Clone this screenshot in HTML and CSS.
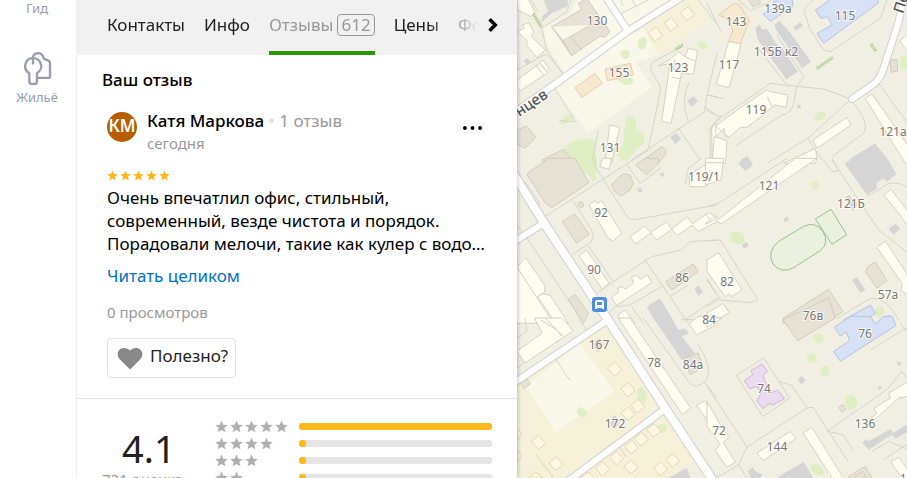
FILE: index.html
```
<!DOCTYPE html>
<html lang="ru">
<head>
    <meta charset="UTF-8">
    <meta name="viewport" content="width=device-width, initial-scale=1.0">
    <title>Отзывы</title>
    <link rel="stylesheet" href="styles.css">
</head>
<body>

<!-- Shared icons -->
<svg class="sprite" aria-hidden="true">
    <symbol id="star" viewBox="0 0 24 24">
        <path d="M12 1l3.300 7.600 8.200.7-6.200 5.400 1.900 8.100L12 18.500l-7.200 4.300 1.900-8.100L.5 9.300l8.200-.7z"/>
    </symbol>
</svg>

<div class="app">
    <nav class="sidebar">
        <a class="side-link" href="#">Гид</a>
        <a class="side-link" href="#">
            <svg class="side-icon" viewBox="66 152 87 104" aria-hidden="true">
                <path d="M94 176q2-17 17-18 15 1 17 16l15 7q4 2 4 7v39q0 5-4 5h-33"/>
                <path d="M96 173a24 24 0 0 0-11 45v24q0 8 7 8h9q7 0 7-8v-24a24 24 0 0 0-12-45z"/>
                <path d="M96 175v14"/>
            </svg>
            Жильё
        </a>
    </nav>

    <main class="panel">
        <div class="tabs">
            <div class="tab-list">
                <a class="tab" href="#">Контакты</a>
                <a class="tab" href="#">Инфо</a>
                <a class="tab active" href="#">Отзывы <span class="count">612</span></a>
                <a class="tab" href="#">Цены</a>
                <a class="tab" href="#">Фото</a>
            </div>
            <button class="next" type="button" aria-label="Дальше">
                <svg viewBox="0 0 10 14"><path d="M2 2l5 5-5 5"/></svg>
            </button>
        </div>

        <section class="my-review">
            <h2>Ваш отзыв</h2>
            <div class="author">
                <div class="avatar">КМ</div>
                <div class="author-info">
                    <div class="author-name"><b>Катя Маркова</b><i class="dot"></i><span>1 отзыв</span></div>
                    <div class="date">сегодня</div>
                </div>
                <button class="more" type="button" aria-label="Ещё">
                    <svg viewBox="0 0 20 4"><circle cx="2" cy="2" r="2"/><circle cx="10" cy="2" r="2"/><circle cx="18" cy="2" r="2"/></svg>
                </button>
            </div>
            <div class="stars">
                <svg><use href="#star"/></svg><svg><use href="#star"/></svg><svg><use href="#star"/></svg><svg><use href="#star"/></svg><svg><use href="#star"/></svg>
            </div>
            <p class="review-text">Очень впечатлил офис, стильный,<br>современный, везде чистота и порядок.<br>Порадовали мелочи, такие как кулер с водо…</p>
            <a class="read-more" href="#">Читать целиком</a>
            <div class="views">0 просмотров</div>
            <button class="useful" type="button">
                <svg viewBox="0 0 26 23"><path d="M13 22.500L2.500 12C-3 5 5-3 13 3.500 21-3 29 5 23.500 12z"/></svg>
                Полезно?
            </button>
        </section>

        <section class="rating">
            <div class="score">
                <div class="score-value">4.1</div>
                <div class="score-count">731 оценка</div>
            </div>
            <div class="rows">
                <div class="row">
                    <div class="row-stars"><svg><use href="#star"/></svg><svg><use href="#star"/></svg><svg><use href="#star"/></svg><svg><use href="#star"/></svg><svg><use href="#star"/></svg></div>
                    <div class="bar"><div class="fill" style="width: 100%"></div></div>
                </div>
                <div class="row">
                    <div class="row-stars"><svg><use href="#star"/></svg><svg><use href="#star"/></svg><svg><use href="#star"/></svg><svg><use href="#star"/></svg></div>
                    <div class="bar"><div class="fill" style="width: 3%"></div></div>
                </div>
                <div class="row">
                    <div class="row-stars"><svg><use href="#star"/></svg><svg><use href="#star"/></svg><svg><use href="#star"/></svg></div>
                    <div class="bar"><div class="fill" style="width: 3%"></div></div>
                </div>
                <div class="row">
                    <div class="row-stars"><svg><use href="#star"/></svg><svg><use href="#star"/></svg></div>
                    <div class="bar"><div class="fill" style="width: 3%"></div></div>
                </div>
            </div>
        </section>
    </main>

    <div class="map">
        <svg class="map-canvas" viewBox="517 0 390 478" preserveAspectRatio="xMinYMin slice">
            <!-- top left tile -->
            <g transform="translate(515 0) scale(.33333)">
                <path class="pale" d="M85 85L165 42 185-5H275L332 92 150 218 95 135zM290-5H480L345 85zM118 262L345 105 385 82 430 165 362 185 412 262 218 398z"/>
                <path class="yellow" d="M385 85L500-5H545L582 65 430 165z"/>
                <path class="green" d="M368 125q10-20 25-12 8 20-8 36-18 5-17-24zM315 160q15-18 28-5 3 20-10 22-14-2-18-17zM548 128q20-12 30 8-10 20-26 8zM300 235h55q5 22-25 20zM138 362q20-22 38-20l-10 22-28 12zM145 445q40-40 95-25l5 60 0 40h-60zM335 350q30-10 30 40 35 10 20 40-30 30-50 55l-30-20q30-40 20-65z"/>
                <path class="path" d="M170-5L155 35 80 85 95 150 142 222M45-5L70 35M6 210L90 163 105 172 145 222M118 262L180 365 132 362M250 390L230 490M545-5L605 70M315-5L325 18M350-5L362 18M500 140L415 185Q395 200 425 240 440 255 435 280L400 445M522 248Q495 300 520 365M350 480L570 335 575 285 605 290M565 320L600 340M490 385L555 480M320 40L400 0"/>
                <path class="hedge" d="M55 42L80 82M482 148L505 134"/>
                <path class="gray" d="M85-5H158V18L110 40 76 70 85 45 100 35zM26 182l12-8 10 12-12 8zM515 303l20-14 14 14-20 17zM466 412l18-13 14 18-18 15z"/>
                <path class="beige" d="M110 80L200 28 190 10 215-5 285 95 270 112 255 108 170 167zM110 80L145 122 228 74M145 122L170 167M165 108L200 150M6 390L35 378 62 412 30 445 6 432zM80 480L145 448 180 490zM385 480L440 440 455 452 450 465 430 490z"/>
                <path class="house" d="M6 95L28 85 22 75 42 68 55 95 50 110 90 150 66 173 35 135 36 120zM6 240L75 190 98 218 15 273 6 262zM72 188l12-8 22 32M62 195l24 30M270 490L284 375 314 382 290 490zM6-5H38L60 35 48 50 6 28zM465 190L430 198 470 175 490 155 510 170 520 145 548 152 535 223 500 218 468 370 440 364zM470 232L497 237M510 170L542 184M480 178L475 208 500 215M590 380L605 370V490H592z"/>
                <path class="orange" d="M270 207L346 190 355 225 277 242zM180 263L240 220 263 250 200 292z"/>
                <path class="cabin" d="M400 98l25-17 18 27-25 17zM448 68l22-15 18 25-22 16zM496 37l24-18 18 25-23 18z"/>
            </g>
            <!-- top right tile -->
            <g transform="translate(707 0) scale(.33333)">
                <path class="path" d="M90-5L130 32 180 10 195-5M0 10L42 95M30 160L0 285 50 297M320 0L290 30 310 90 350 150 370 155 520 55 540 0M210 105L290 230 268 262M150 140L245 262M0 330Q25 350 42 348L0 395M10 480V390L25 365 190 250 355 268 432 298 302 415 345 480M268 262L260 310Q255 340 225 345L85 438M432 298Q490 370 470 400L375 470M515 250L605 375M302 415L180 490"/>
                <path class="hedge" d="M330 205L378 172M492 132L507 154"/>
                <path class="green" d="M320 350q12-20 32-15 8 15-8 24-20 10-24-9zM580 170l25-5v50l-28-12zM-6 135q10 0 10 8l-10 5z"/>
                <path class="gray" d="M145 85L158 73 165 88 180 86 210 135 225 142 272 215 238 238 152 118zM202 75L217 62 250 98 312 185 285 205 205 85zM258 82l22-16 8 12-22 14zM270 320a6 6 0 1 0 12 0 6 6 0 1 0-12 0M430 475L505 430 550 490H430zM100 480l20-12 15 20z"/>
                <path class="beige" d="M122-5L138 20 160 10 158-5zM550 180l20-2 2 35-20 4z"/>
                <path class="blue" d="M168 42L205 22 200 5 220-5H255L258 18 190 64zM325 30L375-5H510L515 8 350 130 330 100 375 75 362 50 342 55z"/>
                <path class="orange" d="M34 45L82 10 98 15 126 62 100 132 65 124 78 90 60 55z"/>
                <path class="house" d="M65 124L102 132 66 263 28 253zM475 295L495 282 605 440V500L595 490zM605 100L578 122 605 160zM25 378L105 320 180 270 190 275 242 285 238 322 205 315 190 325 165 348 120 382 100 382 66 412 55 410 52 385 28 410zM180 290L195 318M25 378L66 412M22 410L60 422 55 490H15zM318 420L420 352 432 375 330 445zM230 490L325 445 330 475 325 490z"/>
            </g>
            <!-- middle left tile -->
            <g transform="translate(515 160) scale(.33333)">
                <path class="green" d="M185-5H228L245 55 235 65zM305 0Q320 8 340-5z"/>
                <path class="path" d="M30 65L75 130 68 142M40 90L60 120M90 170L400-30M240-5V20L340 175 355 180 605 135M335 12L375 70 440 22M510 75L520 25 560-5M170 285L230 245 235 220 175 122M40 240L200 480M6 195L40 240M220 258L295 365 245 400M295 365L410 290 500 270 525 245 605 240M390 300L520 490M440 380L345 435 300 440 280 460M465 410L520 375M350 440L385 490M510 480L605 415M575 355L605 400"/>
                <path class="beige" d="M35 42L100-5H180L222 68 110 143 90 128zM142 185L180 162 222 222 185 250zM290 75L308 55 325 42 345 45 355 68 345 90 318 108 300 95zM362 15L390-5H430V10L395 45zM160 418L180 403 220 460 205 490zM452 365L535 312 550 335 470 390zM190 130q8-12 16 2 0 14-10 10-8-4-6-12"/>
                <path class="gray" d="M395 440L435 415 480 490H425zM538 385l14-8 12 20-14 10zM366 88l10-6 8 10-10 8zM435 42l8-6 6 10-8 6z"/>
                <path class="house" d="M222 135L240 122 248 130 260 122 320 220 295 243 280 235zM255 20L262-5H290L282 28zM192 288L215 270 282 370 262 387zM6 322L32 292 90 378 88 398 68 410 80 402 105 405 160 490H6M6 322L110 480M68 410L122 490M290 412L312 395 308 385 322 380 332 388 355 370 350 352 365 345 375 358 398 345 410 368 305 436zM308 465L330 450 360 490H320zM345 230L390 198 407 218 455 185 470 208 517 170 532 192 580 158 605 170V185L550 215 532 195 487 226 470 208 425 240 407 218 362 252zM605 285L575 310 605 360zM525 80L522 45 600-5H605V55L570 80z"/>
            </g>
            <!-- middle right tile -->
            <g transform="translate(707 160) scale(.33333)">
                <path class="green" d="M313 70q8-12 20-4 6 18-10 24-12-6-10-20zM70 220q20-14 40 2l2 25q-25 12-42-5zM505 445q12-12 26-2 4 20-15 28-18-6-11-26z"/>
                <path class="path" d="M0 140Q30 135 50 120L240-5M350 0L375 35 395 32 375-5M375 0L395 30 515 210 605 280M480 110L545 70Q580 65 605 85M0 243L40 240 152 418 130 428 40 420 0 360M0 440L40 415M390 475L490 415Q540 410 575 480"/>
                <path class="gray" d="M412 10L440-5H540L568 42 540 65 530 55 508 70 510 85 480 105zM94 10L110-5H125L138 15 115 34zM228 178l12-8 6 10-12 7zM104 255l14-9 8 10-14 10zM415 112l12-8 12 20 12 8-12 22-10-15zM545 206l20-15 15 16-20 17zM435 360l14-9 26 38-14 10z"/>
                <path class="beige" d="M228 475L365 388 408 455 350 490H228zM475 335L485 318 505 306 540 362 510 384z"/>
                <path class="blue" d="M410 480L490 435 505 460 460 490zM520 490L545 465 560 490z"/>
                <path class="house" d="M-5 192L20 170 35 178 265-5H330L42 192 22 178 0 192zM-5 160L10 180M0 300L35 278 105 390 75 410 65 402 55 410 0 335zM0 460L48 430 67 458 10 490zM530 105L552 88 600 150H605V200L575 160zM510 262L535 243 605 350V410L582 390 585 370zM-5 75L42 60 50-5H-5zM-5 8H48"/>
                <path class="field" d="M215 244L290 199Q325 182 348 215 368 250 340 272L258 324Q222 342 198 312 178 274 215 244zM325 177L372 148 419 224 375 253z"/>
            </g>
            <!-- bottom left tile -->
            <g transform="translate(515 318) scale(.33333)">
                <path class="yellow" d="M0 195L280 12 440 270 160 480H0zM190 480L450 285 540 425 465 480z"/>
                <path class="pale" d="M32 205L195 75 298 222 122 342z"/>
                <path class="green" d="M365 215q20-20 28 15 5 22-10 28-16-6-18-43zM186 275q10-15 20-3 16 14 6 26-30 0-26-23zM430 320q25-8 26 14-6 18-30 6zM392 322l25-12v12l-20 8z"/>
                <path class="path" d="M6 150L60 110M190 5L215 35M120 120L165 188M64 410L115 480M312 385L335 418M330 0L500 255M385 0L520 190Q540 220 575 185 595 150 547 75M568 190L605 240M500 5H605M6 60L35 40 30 0"/>
                <path class="gray" d="M412-5H465L490 35 510 32 522 45 500 55 540 105 520 130 500 125zM240 70l15-10 12 22-18 20-12-15zM290 300l10-8 15 20-15 22-12-10zM440 490L515 450 530 490z"/>
                <path class="beige" d="M18 195l18-12 10 15-20 14zM520 155L510 120 550 105 558 130 545 160 525 170z"/>
                <path class="house" d="M6 100L82 45 58 0H140L175 38 30 135zM75 5L125 35 140 55M90 0L145 55M310 0H345L527 270 502 290zM522 18L550-5H605V20L545 50zM545 262L570 248 605 300V345z"/>
                <path class="cabin" d="M277 150l22-19 21 24-22 20zM318 212l22-19 20 24-22 20zM348 262l22-18 19 22-22 19zM318 285l22-19 20 22-22 19zM49 370l22-18 21 24-22 18zM102 435l22-19 20 24-22 18zM395 335l22-18 20 22-22 19zM358 362l22-19 20 22-22 19zM328 385l22-18 20 23-22 18zM284 418l22-18 20 22-22 19zM242 450l22-18 20 22-22 19zM327 445l22-19 20 23-22 19zM416 450l22-19 20 23-22 19zM452 425l22-18 20 22-22 19zM200 475l22-12 20 20h-42zM40 480l22-18 22 18zM6 330l14 18-14 20zM6 395l14 18-14 20z"/>
            </g>
            <!-- bottom right tile -->
            <g transform="translate(707 318) scale(.33333)">
                <path class="green" d="M322 50q15-12 28 5 2 18-14 22-18-4-14-27zM302 112q12-14 26 2 4 22-16 20-18-4-10-22zM342 150q16-14 24 0 4 20-10 28-16-2-14-28zM420 235q22-14 34 20-10 22-30 20-18-18-4-40zM312 440q20-12 40 22-4 20-26 6-22-8-14-28z"/>
                <path class="path" d="M88 172L170 120 248 240 168 296zM0 205L120 387 95 440 20 485M95 440L120 480M215 190L255 202 300 270 120 387M300 270L318 268 425 433M360 340L540 215 585 160 605 190M360 340L408 350 440 400M492 95L605 25M580 15L605 50M495 400L545 370 605 395M530 425L605 375"/>
                <path class="gray" d="M272 182l14-8 10 14-14 12zM568 135l8-6 8 8-8 8zM512 208l7-6 6 7-7 7zM466 375L478 362 485 370 550 333 560 345 605 315V340L565 362 555 350 485 395zM215 475L290 432 325 490H215zM122 460l15-12 12 15 18 5-12 22h-20zM595 295l10-5v15z"/>
                <path class="beige" d="M228 5L365-60 385 0 272 68zM395 268l12-8 10 14-12 8zM425 475L475 445 500 490H425zM440 478L468 460 480 485"/>
                <path class="blue" d="M382 28L430-5H490L505 18 530-5H555L567 22 400 130 380 100 428 68 418 42 400 54z"/>
                <path class="lilac" d="M112 188L138 170 132 158 165 138 182 160 168 172 180 205 190 225 212 216 233 242 195 262 190 255 168 272 150 250 162 225 150 205 128 212z"/>
                <path class="house" d="M0 250L48 335 68 358 48 372 85 432 60 448 25 398 40 378 0 325zM0 0H45L0 28zM150 405L250 340 267 362 168 428zM288 345L315 328 415 490H382zM465 325L510 285 500 272 550 240 545 225 605 190V235L575 240 520 290 468 335zM552 432L575 418 605 460V500L590 490z"/>
            </g>

            <g class="roads">
                <path class="casing" d="M685-5L628 31 558 82 508 117M605-4L628 31M506 247L544 223M508 387L608 320M560 487L665 409"/>
                <path class="casing wide" d="M510 168L544 223 608 320 665 408 718 488"/>
                <path class="casing" d="M905-6L898 24 883 70Q880 79 874 84L852 99"/>
                <path class="road" d="M685-5L628 31 558 82 508 117M605-4L628 31M506 247L544 223M508 387L608 320M560 487L665 409"/>
                <path class="road wide" d="M510 168L544 223 608 320 665 408 718 488"/>
                <path class="road" d="M905-6L898 24 883 70Q880 79 874 84L852 99"/>
            </g>

            <g class="stop">
                <rect x="592" y="297" width="15" height="15" rx="3"/>
                <path d="M595 309v-7q0-2 2-2h5q2 0 2 2v7h-2v-1h-5v1zM597 302v3h5v-3z"/>
            </g>

            <g class="labels">
                <text x="597" y="25">130</text>
                <text x="619" y="77">155</text>
                <text x="678" y="72">123</text>
                <text x="610" y="152">131</text>
                <text x="736" y="26">143</text>
                <text x="778" y="13">139а</text>
                <text x="845" y="20">115</text>
                <text x="776" y="56">115Б к2</text>
                <text x="729" y="69">117</text>
                <text x="756" y="114">119</text>
                <text x="893" y="136">121а</text>
                <text x="704" y="181">119/1</text>
                <text x="769" y="190">121</text>
                <text x="851" y="208">121Б</text>
                <text x="888" y="299">57а</text>
                <text x="601" y="217">92</text>
                <text x="594" y="274">90</text>
                <text x="682" y="282">86</text>
                <text x="727" y="286">82</text>
                <text x="709" y="324">84</text>
                <text x="813" y="320">76в</text>
                <text x="865" y="338">76</text>
                <text x="599" y="349">167</text>
                <text x="654" y="367">78</text>
                <text x="693" y="369">84а</text>
                <text x="764" y="393">74</text>
                <text x="615" y="428">172</text>
                <text x="719" y="435">72</text>
                <text x="777" y="451">144</text>
                <text x="865" y="428">136</text>
                <text x="910" y="483">134</text>
                <text class="street" transform="translate(534 107) rotate(-34)">нцев</text>
                <text class="street" transform="translate(906 5) rotate(-72)">Пе</text>
            </g>
        </svg>
    </div>
</div>

</body>
</html>
```
FILE: styles.css
```
* {
    box-sizing: border-box;
}
body {
    margin: 0;
    font-family: "Noto Sans", "Open Sans", sans-serif;
    font-size: 17px;
    line-height: 23px;
    color: #000;
    background-color: #fff;
}
a {
    text-decoration: none;
    color: inherit;
}
button {
    font: inherit;
    color: inherit;
    background: none;
    border: none;
    padding: 0;
    cursor: pointer;
}
svg {
    display: block;
}
.sprite {
    display: none;
}
.app {
    display: flex;
    height: 100vh;
    overflow: hidden;
}

/* Left navigation */
.sidebar {
    flex: 0 0 76px;
    display: flex;
    flex-direction: column;
    gap: 34px;
    padding-right: 2px;
}
.side-link {
    display: flex;
    flex-direction: column;
    align-items: center;
    font-size: 13px;
    line-height: 17px;
    color: #989cad;
}
.side-icon {
    width: 29px;
    height: 35px;
    margin-bottom: 3px;
    fill: #fff;
    stroke: #989cad;
    stroke-width: 7;
    stroke-linecap: round;
}

/* Card */
.panel {
    flex: 0 0 441px;
    min-width: 0;
    border-left: 1px solid #f1f1f1;
    position: relative;
    z-index: 1;
    background-color: #fff;
    box-shadow: 2px 0 3px rgba(0, 0, 0, 0.15);
}
.tabs {
    display: flex;
    align-items: center;
    height: 55px;
    padding: 0 18px 0 30px;
    background-color: #f1f1f1;
}
.tab-list {
    flex: 1;
    display: flex;
    gap: 19px;
    height: 55px;
    overflow: hidden;
    -webkit-mask-image: linear-gradient(to right, #000 320px, transparent 372px);
    mask-image: linear-gradient(to right, #000 320px, transparent 372px);
}
.tab {
    display: flex;
    gap: 4px;
    align-items: center;
    height: 55px;
    padding-bottom: 6px;
    color: #222;
}
.tab.active {
    color: #999;
    padding-bottom: 2px;
    border-bottom: 4px solid #2c9709;
}
.count {
    line-height: 20px;
    padding: 0 3px;
    border: 1px solid #999;
    border-radius: 4px;
}
.next {
    flex: 0 0 12px;
    margin: 0 0 6px 9px;
}
.next svg {
    width: 12px;
    height: 16px;
    fill: none;
    stroke: #000;
    stroke-width: 3;
}
.my-review {
    padding: 13px 30px 20px;
    border-bottom: 1px solid #e5e5e5;
}
h2 {
    margin: 0 0 18px -5px;
    font-size: 17px;
    font-weight: 500;
}
.author {
    display: flex;
}
.avatar {
    width: 30px;
    height: 30px;
    margin: 3px 10px 0 0;
    border-radius: 50%;
    background-color: #b85c00;
    color: #fff;
    font-size: 17px;
    font-weight: 600;
    line-height: 28px;
    display: flex;
    justify-content: center;
}
.author-info {
    flex: 1;
}
.author-name {
    display: flex;
    align-items: center;
    color: #999;
}
.author-name b {
    font-weight: 500;
    color: #000;
}
.dot {
    width: 5px;
    height: 5px;
    margin: 0 5px;
    border-radius: 50%;
    background-color: #e2e2e2;
}
.date {
    font-size: 15px;
    color: #999;
}
.more {
    padding: 0 5px 8px;
}
.more svg {
    width: 19px;
    height: 4px;
}
.stars {
    display: flex;
    gap: 2px;
    margin: 15px 0 5px;
    fill: #ffb81c;
}
.stars svg {
    width: 11px;
    height: 11px;
}
.review-text {
    margin: 0;
    white-space: nowrap;
}
.read-more {
    display: block;
    margin-top: 9px;
    color: #0070d0;
}
.views {
    margin: 14px 0;
    font-size: 15px;
    color: #999;
}
.useful {
    display: flex;
    align-items: center;
    gap: 7px;
    height: 40px;
    padding: 0 7px 5px 9px;
    border: 1px solid #e2e2e2;
    border-radius: 4px;
    color: #222;
}
.useful svg {
    width: 26px;
    height: 23px;
    margin-top: 5px;
    fill: #888;
}

/* Rating summary */
.rating {
    display: flex;
    padding: 19px 25px 0;
}
.score {
    flex: 0 0 113px;
    color: #222;
}
.score-value {
    padding: 12px 0 5px 20px;
    font-size: 38px;
    line-height: 36px;
}
.score-count {
    font-size: 15px;
    line-height: 17px;
    color: #999;
    white-space: nowrap;
}
.rows {
    flex: 1;
}
.row {
    display: flex;
    align-items: center;
    height: 17px;
}
.row-stars {
    flex: 0 0 84px;
    display: flex;
    gap: 2px;
    fill: #b0b0b0;
}
.row-stars svg {
    width: 13px;
    height: 13px;
}
.bar {
    flex: 1;
    height: 7px;
    border-radius: 3px;
    background-color: #e5e5e5;
}
.fill {
    min-width: 7px;
    height: 7px;
    border-radius: 3px;
    background-color: #ffb81c;
}

/* Map */
.map {
    flex: 1;
    min-width: 0;
    background-color: #f1efe3;
}
.map-canvas {
    width: 100%;
    height: 100%;
}
.map-canvas path {
    stroke-width: 3;
    stroke-linejoin: round;
}
.map-canvas .pale {
    fill: #f9f7ea;
}
.map-canvas .yellow {
    fill: #f5f0d8;
}
.map-canvas .green {
    fill: #dfefc3;
}
.map-canvas .path {
    fill: none;
    stroke: #d3d5c8;
}
.map-canvas .hedge {
    fill: none;
    stroke: #a9cb8b;
    stroke-width: 10;
    stroke-dasharray: 4 3;
}
.map-canvas .gray {
    fill: #d5d5d5;
}
.map-canvas .beige {
    fill: #e6e2d5;
    stroke: #d2ccbc;
}
.map-canvas .house {
    fill: #fffdf0;
    stroke: #d6d1c1;
}
.map-canvas .orange {
    fill: #f7e9cf;
    stroke: #e5cfa9;
}
.map-canvas .cabin {
    fill: #fff6e0;
    stroke: #e3d5b5;
}
.map-canvas .blue {
    fill: #d9e1f4;
    stroke: #b5c3e4;
}
.map-canvas .lilac {
    fill: #ecdcef;
    stroke: #d2b6d9;
}
.map-canvas .field {
    fill: #ecf0de;
    stroke: #92c58a;
}
.map-canvas .casing {
    fill: none;
    stroke: #d0d0d2;
    stroke-width: 8;
    stroke-linecap: round;
}
.map-canvas .road {
    fill: none;
    stroke: #fff;
    stroke-width: 6;
    stroke-linecap: round;
}
.map-canvas .casing.wide {
    stroke-width: 10;
}
.map-canvas .road.wide {
    stroke-width: 8;
}
.stop rect {
    fill: #4c8fe2;
}
.stop path {
    fill: #fff;
    fill-rule: evenodd;
}
.labels {
    font-size: 12px;
    text-anchor: middle;
    fill: #777;
    stroke: #fff;
    stroke-opacity: 0.8;
    stroke-width: 2px;
    paint-order: stroke;
}
.labels .street {
    font-size: 15px;
    font-weight: 500;
    fill: #555;
}
```
